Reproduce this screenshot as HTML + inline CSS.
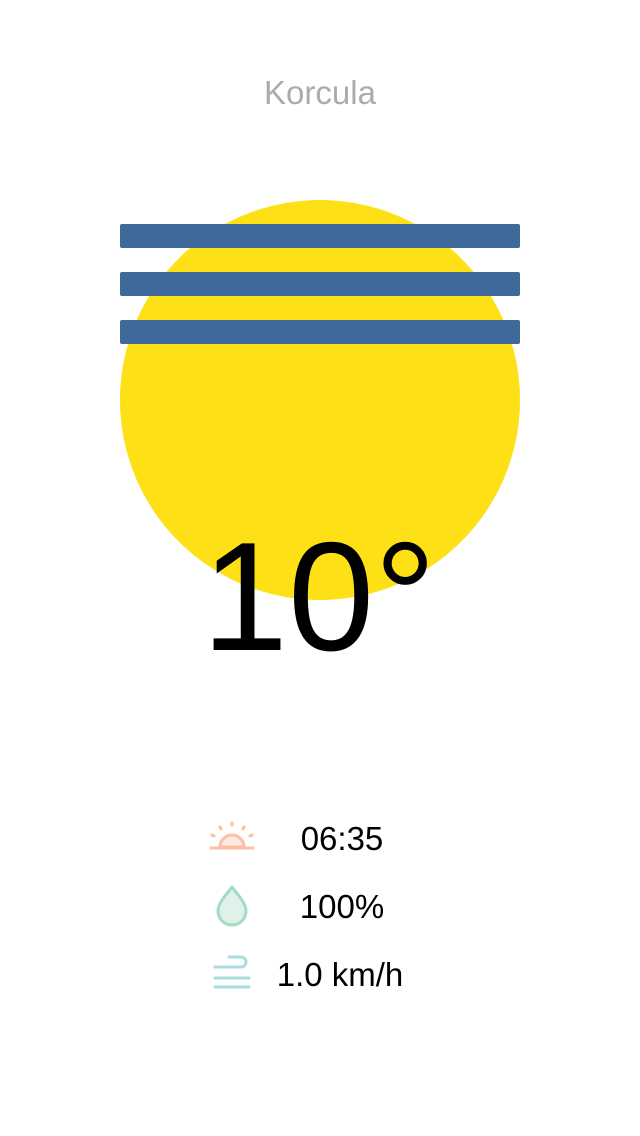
<!DOCTYPE html>
<html><head><meta charset="utf-8"><style>
html,body{margin:0;padding:0;background:#fff;width:640px;height:1136px;overflow:hidden;position:relative;font-family:"Liberation Sans",sans-serif}
.abs{position:absolute}
.city{left:0;width:640px;top:76px;text-align:center;font-size:33px;line-height:33px;color:#ababab}
.sun{left:120px;top:200px;width:400px;height:400px;border-radius:50%;background:#fee016}
.bar{left:120px;width:400px;height:24px;background:#3f6a9b;border-radius:2px}
.temp{left:0;width:638px;top:519px;text-align:center;font-size:155px;line-height:155px;color:#000}
.row{left:262px;width:160px;text-align:center;font-size:33px;line-height:33px;color:#000}
</style></head><body>
<div class="abs city">Korcula</div>
<div class="abs sun"></div>
<div class="abs bar" style="top:224px"></div>
<div class="abs bar" style="top:272px"></div>
<div class="abs bar" style="top:320px"></div>
<div class="abs temp">10°</div>

<svg class="abs" style="left:205px;top:815px" width="54" height="40" viewBox="0 0 54 40">
<path d="M15 32 A12 12 0 0 1 39 32 Z" fill="#fde8df" stroke="#fdbf9f" stroke-width="3"/>
<line x1="6" y1="33" x2="48" y2="33" stroke="#fdbf9f" stroke-width="3" stroke-linecap="round"/>
<g stroke="#fdbf9f" stroke-width="3" stroke-linecap="round">
<line x1="27" y1="8" x2="27" y2="10"/>
<line x1="15" y1="12" x2="16" y2="14"/>
<line x1="39" y1="12" x2="38" y2="14"/>
<line x1="7" y1="20" x2="9" y2="21"/>
<line x1="47" y1="20" x2="45" y2="21"/>
</g></svg>
<div class="abs row" style="top:822px">06:35</div>

<svg class="abs" style="left:212px;top:882px" width="40" height="46" viewBox="0 0 40 46">
<path d="M20 5 C14 13 6 21 6 29 A14 14 0 0 0 34 29 C34 21 26 13 20 5 Z" fill="#e0f1ea" stroke="#a5dac4" stroke-width="3" stroke-linejoin="round"/>
</svg>
<div class="abs row" style="top:890px">100%</div>

<svg class="abs" style="left:210px;top:953px" width="44" height="40" viewBox="0 0 44 40">
<g fill="none" stroke="#a9dde0" stroke-width="3" stroke-linecap="round">
<path d="M19 4 H31 A5 5 0 0 1 31 14 H5"/>
<line x1="5" y1="25" x2="39" y2="25"/>
<line x1="5" y1="34" x2="39" y2="34"/>
</g></svg>
<div class="abs row" style="top:958px;left:260px">1.0 km/h</div>
</body></html>
